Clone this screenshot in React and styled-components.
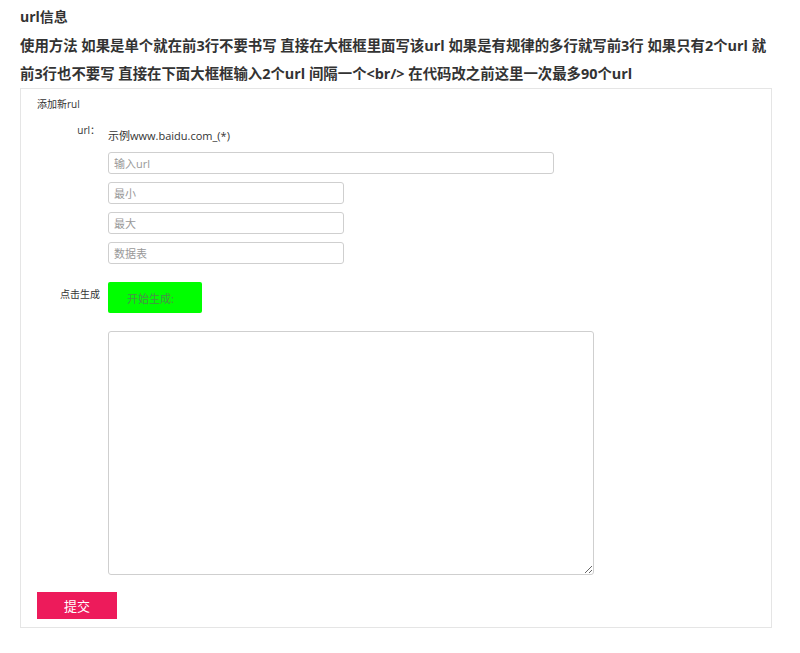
import React from 'react'
import styled, { createGlobalStyle } from 'styled-components'

const FONT = '"Open Sans", "Noto Sans CJK SC", sans-serif'
const BORDER = '#e5e5e5'
const INPUT_BORDER = '#cfcfcf'

const GlobalStyle = createGlobalStyle`
  html, body {
    margin: 0;
    padding: 0;
    background: #fff;
    font-family: ${FONT};
    color: #333;
  }
`

const Page = styled.div`
  padding: 6px 0 0 20px;
  width: 752px;
`
const Title = styled.h3`
  margin: 0;
  font-size: 14px;
  line-height: 22px;
  font-weight: bold;
  color: #333;
`
const Usage = styled.p`
  margin: 4px 0 0;
  font-size: 14.4px;
  line-height: 28px;
  font-weight: bold;
  color: #333;
  white-space: nowrap;
`
const Panel = styled.section`
  border: 1px solid ${BORDER};
  padding: 8px 16px 8px;
  display: flex;
  flex-direction: column;
`
const PanelTitle = styled.div`
  font-size: 10px;
  line-height: 14px;
  color: #333;
  margin-bottom: 11px;
`
const FormRow = styled.div`
  display: flex;
  gap: 8px;
  margin-top: ${(p) => p.top || 0}px;
`
const Label = styled.label`
  width: 63px;
  flex: none;
  text-align: right;
  font-size: 10px;
  line-height: 14px;
  padding-top: ${(p) => p.offset || 0}px;
  color: #333;
`
const Fields = styled.div`
  display: flex;
  flex-direction: column;
  gap: 8px;
`
const Example = styled.div`
  font-size: 11px;
  line-height: 16px;
  color: #333;
  padding-top: 6px;
`
const TextInput = styled.input`
  box-sizing: border-box;
  width: ${(p) => p.w}px;
  height: 22px;
  border: 1px solid ${INPUT_BORDER};
  border-radius: 3px;
  padding: 0 5px;
  font-family: ${FONT};
  font-size: 11px;
  outline: none;
  &::placeholder {
    color: #999;
  }
`
const GenerateButton = styled.button`
  width: 94px;
  height: 31px;
  background: #00ff00;
  border: none;
  border-radius: 2px;
  color: #4b8f4b;
  font-family: ${FONT};
  font-size: 11px;
  text-align: left;
  padding-left: 19px;
  cursor: pointer;
`
const BigBox = styled.textarea`
  box-sizing: border-box;
  width: 486px;
  height: 244px;
  margin-left: 71px;
  margin-top: 18px;
  border: 1px solid ${INPUT_BORDER};
  border-radius: 3px;
  font-family: ${FONT};
  outline: none;
`
const SubmitButton = styled.button`
  align-self: flex-start;
  margin-top: 17px;
  width: 80px;
  height: 27px;
  background: #ed1b5b;
  border: none;
  color: #fff;
  font-family: ${FONT};
  font-size: 13px;
  cursor: pointer;
`

export default function App() {
  return (
    <>
      <GlobalStyle />
      <Page>
        <Title>url信息</Title>
        <Usage>
          使用方法 如果是单个就在前3行不要书写 直接在大框框里面写该url 如果是有规律的多行就写前3行 如果只有2个url 就
          <br />
          前3行也不要写 直接在下面大框框输入2个url 间隔一个&lt;br/&gt; 在代码改之前这里一次最多90个url
        </Usage>
        <Panel>
          <PanelTitle>添加新rul</PanelTitle>
          <FormRow>
            <Label offset={1}>url：</Label>
            <Fields>
              <Example>示例www.baidu.com_(*)</Example>
              <TextInput w={446} placeholder="输入url" />
              <TextInput w={236} placeholder="最小" />
              <TextInput w={236} placeholder="最大" />
              <TextInput w={236} placeholder="数据表" />
            </Fields>
          </FormRow>
          <FormRow top={18}>
            <Label offset={5}>点击生成</Label>
            <GenerateButton>开始生成:</GenerateButton>
          </FormRow>
          <BigBox />
          <SubmitButton>提交</SubmitButton>
        </Panel>
      </Page>
    </>
  )
}
